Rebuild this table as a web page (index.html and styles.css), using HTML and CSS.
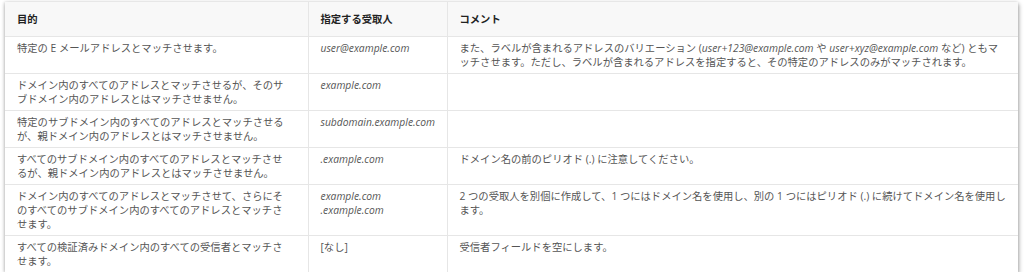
FILE: index.html
```html
<!DOCTYPE html>
<html lang="ja">
<head>
<meta charset="utf-8">
<link rel="stylesheet" href="styles.css">
</head>
<body>
<div class="wrap">
<table class="tbl">
  <colgroup>
    <col class="c1"><col class="c2"><col class="c3">
  </colgroup>
  <thead>
    <tr><th>目的</th><th>指定する受取人</th><th>コメント</th></tr>
  </thead>
  <tbody>
    <tr>
      <td>特定の E メールアドレスとマッチさせます。</td>
      <td><em>user@example.com</em></td>
      <td>また、ラベルが含まれるアドレスのバリエーション (<em>user+123@example.com</em> や <em>user+xyz@example.com</em> など) ともマッチさせます。ただし、ラベルが含まれるアドレスを指定すると、その特定のアドレスのみがマッチされます。</td>
    </tr>
    <tr>
      <td>ドメイン内のすべてのアドレスとマッチさせるが、そのサブドメイン内のアドレスとはマッチさせません。</td>
      <td><em>example.com</em></td>
      <td></td>
    </tr>
    <tr>
      <td>特定のサブドメイン内のすべてのアドレスとマッチさせるが、親ドメイン内のアドレスとはマッチさせません。</td>
      <td><em>subdomain.example.com</em></td>
      <td></td>
    </tr>
    <tr>
      <td>すべてのサブドメイン内のすべてのアドレスとマッチさせるが、親ドメイン内のアドレスとはマッチさせません。</td>
      <td><em>.example.com</em></td>
      <td>ドメイン名の前のピリオド (.) に注意してください。</td>
    </tr>
    <tr>
      <td>ドメイン内のすべてのアドレスとマッチさせて、さらにそのすべてのサブドメイン内のすべてのアドレスとマッチさせます。</td>
      <td><em>example.com</em><br><em>.example.com</em></td>
      <td>2 つの受取人を別個に作成して、1 つにはドメイン名を使用し、別の 1 つにはピリオド (.) に続けてドメイン名を使用します。</td>
    </tr>
    <tr>
      <td>すべての検証済みドメイン内のすべての受信者とマッチさせます。</td>
      <td>[なし]</td>
      <td>受信者フィールドを空にします。</td>
    </tr>
  </tbody>
</table>
</div>
</body>
</html>
```
FILE: styles.css
```css
html, body {
  margin: 0;
  padding: 0;
  background: #ffffff;
}
body {
  padding: 2px 6px 0 5px;
  font-family: "Open Sans", "Noto Sans CJK JP", sans-serif;
}
.wrap {
  width: 1013px;
  box-shadow: 1px 2px 4px rgba(0, 0, 0, 0.35), -1px 0 3px rgba(0, 0, 0, 0.15);
}
.tbl {
  width: 1013px;
  border-collapse: collapse;
  table-layout: fixed;
  font-size: 10.3px;
  line-height: 14px;
  color: #555555;
}
.c1 { width: 303px; }
.c2 { width: 139px; }
.c3 { width: 571px; }
.tbl th {
  background: #f8f8f8;
  color: #222222;
  font-weight: bold;
  text-align: left;
  padding: 10px 12px 10px 12px;
  border-bottom: 1px solid #e6e6e6;
  border-right: 1px solid #e6e6e6;
}
.tbl td {
  vertical-align: top;
  text-align: left;
  padding: 4px 14px 4px 12px;
  border-bottom: 1px solid #e6e6e6;
  border-right: 1px solid #e6e6e6;
}
.tbl td:first-child {
  padding-right: 21px;
}
.tbl tr > :last-child {
  border-right: none;
  padding-right: 12px;
}
.tbl tbody tr:last-child td {
  border-bottom: none;
}
.tbl em {
  font-style: italic;
}
```
